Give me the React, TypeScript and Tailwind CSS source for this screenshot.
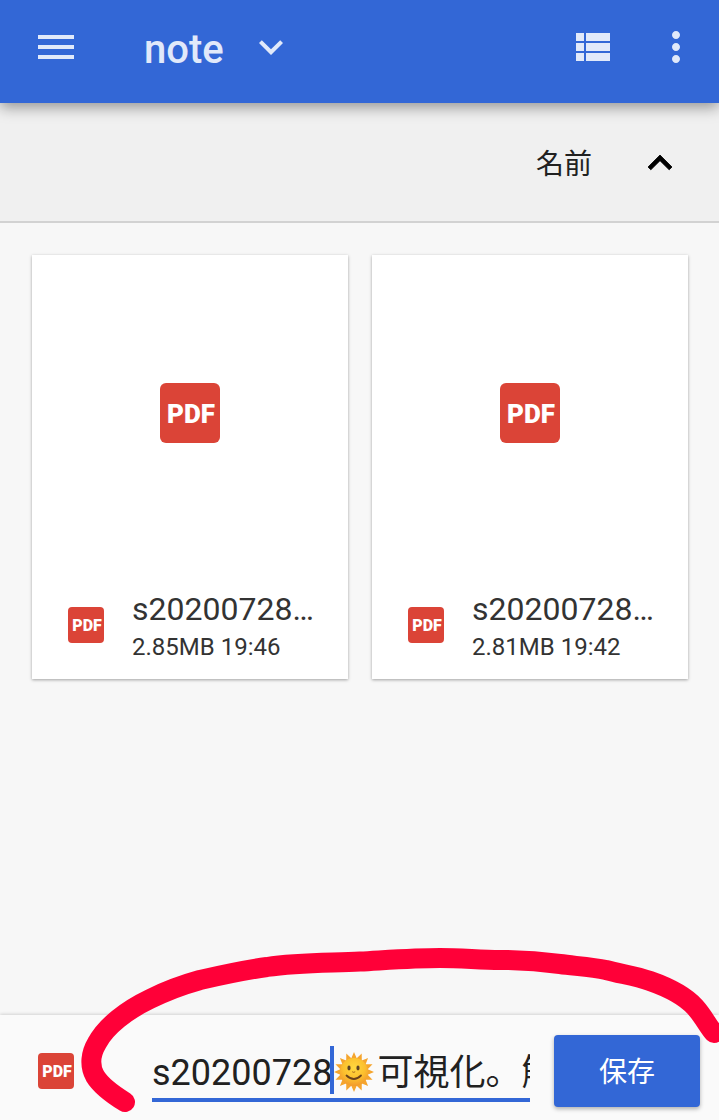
import { useState } from 'react';

type FileItem = {
  name: string;
  size: string;
  time: string;
};

const files: FileItem[] = [
  { name: 's20200728…', size: '2.85MB', time: '19:46' },
  { name: 's20200728…', size: '2.81MB', time: '19:42' },
];

// Alternating outer and inner points of the sun's rays
const sunRays = Array.from({ length: 32 }, (_, i) => {
  const radius = i % 2 === 0 ? 20 : 14;
  const angle = (i * Math.PI) / 16;
  return `${(20 + radius * Math.sin(angle)).toFixed(1)},${(20 - radius * Math.cos(angle)).toFixed(1)}`;
}).join(' ');

const PdfIcon = ({ large = false }: { large?: boolean }) => (
  <span
    className={
      large
        ? 'flex size-15 items-center justify-center rounded-md bg-[#db4437] pt-0.5 pl-0.5 font-[Roboto,sans-serif] text-[26px] leading-none font-black text-white'
        : 'flex size-9 shrink-0 items-center justify-center rounded-sm bg-[#db4437] pt-0.5 pl-0.5 font-[Roboto,sans-serif] text-[16px] leading-none font-black text-white'
    }
  >
    PDF
  </span>
);

const FileCard = ({ file }: { file: FileItem }) => (
  <article className="flex min-w-0 flex-col bg-white shadow-[0_1px_3px_rgba(0,0,0,0.35)]">
    <div className="flex h-79 items-center justify-center">
      <PdfIcon large />
    </div>
    <div className="flex items-center gap-7 px-9 py-[14px]">
      <PdfIcon />
      <div className="min-w-0 pt-1 text-[#333333]">
        <h2 className="text-[32px] leading-10 whitespace-nowrap">{file.name}</h2>
        <p className="text-2xl leading-9 whitespace-nowrap">
          {file.size} {file.time}
        </p>
      </div>
    </div>
  </article>
);

const App = () => {
  const [fileName, setFileName] = useState('s20200728🌞可視化。解説');

  return (
    <div className="relative flex min-h-screen flex-col overflow-hidden bg-[#f7f7f7] font-[Roboto,'Noto_Sans_CJK_JP',sans-serif]">
      <header className="relative z-10 flex items-center bg-[#3367d6] pt-[23px] pr-[31px] pb-8 pl-8 text-[#e1e9fa] shadow-[0_4px_14px_rgba(0,0,0,0.4)]">
        <button type="button" aria-label="Menu">
          <svg className="size-12" viewBox="0 0 24 24" fill="currentColor">
            <path d="M3 18h18v-2H3v2zm0-5h18v-2H3v2zm0-7v2h18V6H3z" />
          </svg>
        </button>
        <button type="button" className="ml-16 flex h-12 items-center gap-[23px]">
          <span className="pt-1.5 text-[40px] leading-[48px] font-medium">note</span>
          <svg className="size-12" viewBox="0 0 24 24" fill="currentColor">
            <path d="M16.59 8.59L12 13.17 7.41 8.59 6 10l6 6 6-6z" />
          </svg>
        </button>
        <button type="button" aria-label="List view" className="ml-auto">
          <svg className="size-12" viewBox="0 0 24 24" fill="currentColor">
            <path d="M4 14h4v-4H4v4zm0 5h4v-4H4v4zM4 9h4V5H4v4zm5 5h12v-4H9v4zm0 5h12v-4H9v4zM9 5v4h12V5H9z" />
          </svg>
        </button>
        <button type="button" aria-label="More options" className="-mr-3 ml-9">
          <svg className="size-12" viewBox="0 0 24 24" fill="currentColor">
            <path d="M12 8c1.1 0 2-.9 2-2s-.9-2-2-2-2 .9-2 2 .9 2 2 2zm0 2c-1.1 0-2 .9-2 2s.9 2 2 2 2-.9 2-2-.9-2-2-2zm0 6c-1.1 0-2 .9-2 2s.9 2 2 2 2-.9 2-2-.9-2-2-2z" />
          </svg>
        </button>
      </header>

      {/* Sort bar */}
      <div className="flex h-30 items-center justify-end border-b-2 border-[#d2d2d2] bg-[#f0f0f0] pt-0.5 pr-[35px]">
        <button type="button" className="flex items-center gap-11 text-[28px] text-[#212121]">
          <span className="pt-1">名前</span>
          <svg className="size-12 text-black" viewBox="0 0 24 24" fill="currentColor" stroke="currentColor" strokeWidth="0.4">
            <path d="M12 8l-6 6 1.41 1.41L12 10.83l4.59 4.58L18 14z" />
          </svg>
        </button>
      </div>

      <main className="grid flex-1 grid-cols-2 content-start gap-6 pt-8 pr-[31px] pl-8">
        {files.map((file) => (
          <FileCard key={file.time} file={file} />
        ))}
      </main>

      {/* Save bar */}
      <footer className="flex items-center bg-[#fafafa] pt-5 pr-[19px] pb-[13px] pl-[38px] shadow-[0_-1px_3px_rgba(0,0,0,0.15)]">
        <PdfIcon />
        <div className="relative ml-[78px] min-w-0 flex-1">
          <input
            type="text"
            aria-label="File name"
            value={fileName}
            onChange={(e) => setFileName(e.target.value)}
            className="block h-[62px] w-full border-b-4 border-[#3367d6] bg-transparent text-4xl text-[#212121] outline-none"
          />
          {/* Sun with a smile, laid over the emoji in the text */}
          <span className="pointer-events-none absolute top-2 left-[182px] flex h-12 w-[42px] items-center bg-[#fafafa]">
            <svg className="size-10" viewBox="0 0 40 40">
              <defs>
                <radialGradient id="sun-face" cx="50%" cy="35%" r="65%">
                  <stop offset="0" stopColor="#ffd83f" />
                  <stop offset="0.6" stopColor="#fcc02e" />
                  <stop offset="1" stopColor="#f29a2c" />
                </radialGradient>
              </defs>
              <polygon points={sunRays} fill="#f5a52e" />
              <circle cx="20" cy="20" r="14" fill="url(#sun-face)" />
              <ellipse cx="15" cy="16" rx="1.6" ry="2.4" fill="#5d4325" />
              <ellipse cx="24" cy="16" rx="1.6" ry="2.4" fill="#5d4325" />
              <path d="M18.5 20q1.2 1 2.4 0" fill="none" stroke="#a8671c" strokeWidth="1" strokeLinecap="round" />
              <path d="M12.5 23.5Q20 30.5 27 23.5" fill="none" stroke="#6b431b" strokeWidth="1.8" strokeLinecap="round" />
            </svg>
          </span>
          {/* Text cursor */}
          <span className="absolute top-1.5 left-[178px] h-12 w-1 bg-[#3367d6]" />
        </div>
        <button
          type="button"
          className="ml-6 h-[72px] w-[146px] rounded-sm bg-[#3367d6] pt-1 text-[28px] text-white shadow-[0_2px_4px_rgba(0,0,0,0.3)]"
        >
          保存
        </button>
      </footer>

      {/* Hand-drawn marker around the file name */}
      <svg
        className="pointer-events-none absolute bottom-0 left-0 z-20 w-full"
        viewBox="0 0 719 180"
        fill="none"
        stroke="#ff0038"
        strokeWidth="20"
        strokeLinecap="round"
        strokeLinejoin="round"
      >
        <path d="M125 162C112 154 101 146 95 136C89 125 91 113 97 103C106 86 127 70 150 59C166 51 182 45 200 40C222 35 245 30 267 27C298 22 330 23 360 21.5C388 20 415 18 440 18C462 18 480 20 500 20C525 20 545 22 560 24C575 26 592 27 606 30C621 34 636 36 650 41C670 48 685 56 695 67C704 77 709 88 714 93" />
      </svg>
    </div>
  );
};

export default App;
